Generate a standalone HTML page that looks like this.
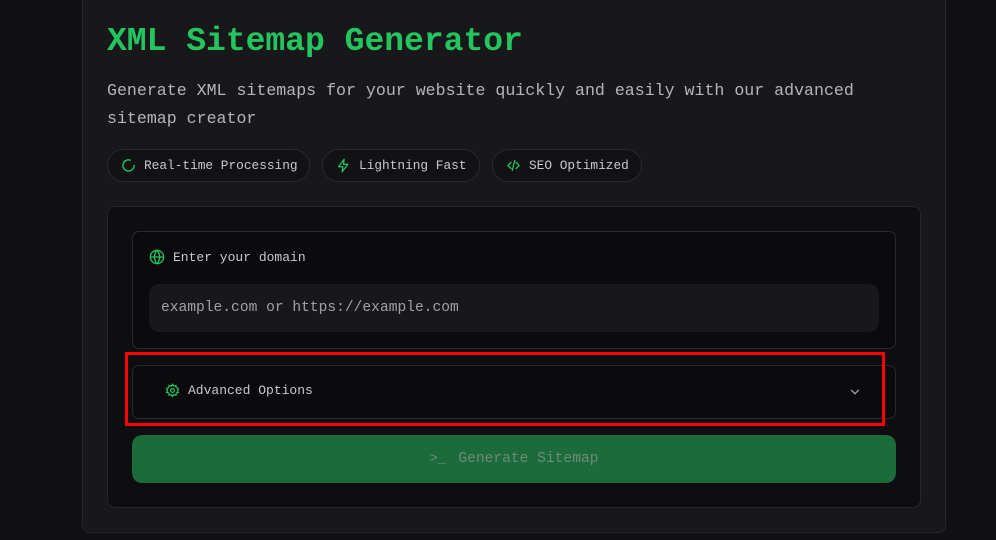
<!DOCTYPE html>
<html><head><style>
*{box-sizing:border-box;margin:0;padding:0}
body{width:996px;height:540px;background:#111113;font-family:"Liberation Mono",monospace;position:relative;overflow:hidden}
.outer{position:absolute;left:82px;top:-10px;width:864px;height:543px;background:#18181b;border:1px solid #27272a;border-radius:8px}
.abs{position:absolute}
h1{position:absolute;left:107px;top:23px;font-size:33px;font-weight:bold;color:#22c55e;white-space:nowrap}
.sub{position:absolute;left:107px;top:77px;font-size:16.6px;line-height:28px;color:#b4b4bd;width:760px}
.pill{position:absolute;top:149px;height:33px;border:1px solid #2a2a2e;border-radius:17px;background:#121214;color:#c8c8d0;font-size:12.8px;display:flex;align-items:center;padding-left:13px;gap:8px}
.pill svg{width:15px;height:15px}
.inner{position:absolute;left:107px;top:206px;width:814px;height:302px;background:#0e0e10;border:1px solid #27272a;border-radius:8px}
.box{position:absolute;left:132px;width:764px;border:1px solid #2a2a2e;border-radius:7px;background:#0b0b0d}
.input{position:absolute;left:149px;top:284px;width:730px;height:48px;background:#18181b;border-radius:10px;color:#a0a0a8;font-size:14.6px;padding-left:12px;line-height:48px}
.btn{position:absolute;left:132px;top:435px;width:764px;height:48px;background:#1c6b3a;border-radius:10px;color:#6f8a78;font-size:14.6px;display:flex;align-items:center;justify-content:center;gap:12px}
.red{position:absolute;left:125px;top:352px;width:760px;height:74px;border:3px solid #ff0000}
</style></head><body>
<div class="outer"></div>
<h1>XML Sitemap Generator</h1>
<div class="sub">Generate XML sitemaps for your website quickly and easily with our advanced sitemap creator</div>
<div class="pill" style="left:107px;width:203px"><svg viewBox="0 0 24 24" fill="none" stroke="#22c55e" stroke-width="2.2" stroke-linecap="round"><path d="M21 12a9 9 0 1 1-6.2-8.6"/></svg>Real-time Processing</div>
<div class="pill" style="left:322px;width:158px"><svg viewBox="0 0 24 24" fill="none" stroke="#22c55e" stroke-width="2" stroke-linejoin="round"><path d="M13 2 4 14h7l-1 8 9-12h-7z"/></svg>Lightning Fast</div>
<div class="pill" style="left:492px;width:150px"><svg viewBox="0 0 24 24" fill="none" stroke="#22c55e" stroke-width="2" stroke-linecap="round"><path d="M8 7l-5 5 5 5M16 7l5 5-5 5M14 4l-4 16"/></svg>SEO Optimized</div>
<div class="inner"></div>
<div class="box" style="top:231px;height:118px"></div>
<div class="abs" style="left:149px;top:249px;display:flex;align-items:center;gap:8px;color:#c8c8d0;font-size:13px"><svg width="16" height="16" viewBox="0 0 24 24" fill="none" stroke="#22c55e" stroke-width="2"><circle cx="12" cy="12" r="10"/><path d="M2 12h20M12 2a15 15 0 0 1 0 20M12 2a15 15 0 0 0 0 20"/></svg>Enter your domain</div>
<div class="input">example.com or https://example.com</div>
<div class="box" style="top:365px;height:54px"></div>
<div class="abs" style="left:165px;top:383px;display:flex;align-items:center;gap:8px;color:#c8c8d0;font-size:13px"><svg width="15" height="15" viewBox="0 0 24 24" fill="none" stroke="#22c55e" stroke-width="2"><circle cx="12" cy="12" r="3"/><path d="M12 2l2 3 3.5-1 .5 3.5 3.5 1-1.5 3.5 1.5 3-3.5 1-.5 3.5-3.5-1-2 3-2-3-3.5 1-.5-3.5-3.5-1 1.5-3-1.5-3.5 3.5-1 .5-3.5 3.5 1z"/></svg>Advanced Options</div>
<svg class="abs" style="left:848px;top:385px" width="14" height="14" viewBox="0 0 24 24" fill="none" stroke="#a0a0a8" stroke-width="2.2" stroke-linecap="round"><path d="M6 9l6 6 6-6"/></svg>
<div class="red"></div>
<div class="btn"><span style="font-size:14px">&gt;_</span>Generate Sitemap</div>
</body></html>
